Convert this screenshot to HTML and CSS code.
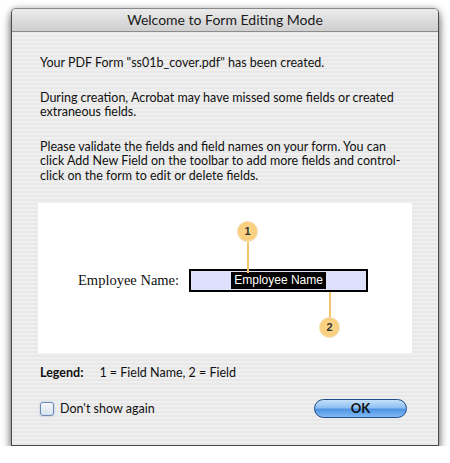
FILE: index.html
```html
<!DOCTYPE html>
<html>
<head>
<meta charset="utf-8">
<link rel="stylesheet" href="styles.css">
</head>
<body>
<div class="window">
  <div class="titlebar">Welcome to Form Editing Mode</div>
  <div class="content">
    <p class="para">Your PDF Form "ss01b_cover.pdf" has been created.</p>
    <p class="para">During creation, Acrobat may have missed some fields or created extraneous fields.</p>
    <p class="para">Please validate the fields and field names on your form. You can click Add New Field on the toolbar to add more fields and control-click on the form to edit or delete fields.</p>
    <div class="sample">
      <div class="sample-row">
        <span class="sample-label">Employee Name:</span>
        <div class="field">
          <span class="field-name">Employee Name</span>
          <div class="callout callout-1"><span class="bubble">1</span><span class="stem"></span></div>
          <div class="callout callout-2"><span class="stem"></span><span class="bubble">2</span></div>
        </div>
      </div>
    </div>
    <p class="legend"><b>Legend:</b><span class="legend-text">1 = Field Name, 2 = Field</span></p>
    <div class="footer">
      <label class="check"><span class="box"></span>Don't show again</label>
      <button class="ok">OK</button>
    </div>
  </div>
</div>
</body>
</html>
```

FILE: styles.css
```css
html, body {
  margin: 0;
  padding: 0;
  background: #ffffff;
}
body {
  font-family: "Lato", "DejaVu Sans", sans-serif;
  font-size: 12.5px;
  color: #111;
}
.window {
  margin: 8px 0 0 11px;
  width: 426px;
  height: 436px;
  border: 1px solid #4a4a4a;
  border-top-color: #888;
  border-radius: 5px 5px 0 0;
  box-shadow: 0 6px 10px rgba(0,0,0,0.55), 0 0 6px rgba(0,0,0,0.25);
  background: repeating-linear-gradient(to bottom, #efefef 0, #efefef 2px, #e8e8e8 2px, #e8e8e8 4px);
  overflow: hidden;
  display: flex;
  flex-direction: column;
}
.titlebar {
  height: 22px;
  line-height: 22px;
  text-align: center;
  font-size: 14px;
  color: #1a1a1a;
  background: linear-gradient(to bottom, #ececec 0%, #dcdcdc 50%, #cfcfcf 100%);
  border-bottom: 1px solid #8c8c8c;
}
.content {
  padding: 0 0 0 28px;
  display: flex;
  flex-direction: column;
}
.para {
  margin: 0;
  line-height: 14.5px;
  width: 372px;
}
.para:first-child { margin-top: 24px; }
.para + .para { margin-top: 20px; }
.sample {
  margin: 20px 0 0 -2px;
  width: 374px;
  height: 150px;
  background: #fff;
  display: flex;
  align-items: center;
}
.sample-row {
  display: flex;
  align-items: center;
  margin: 5px 0 0 40px;
}
.sample-label {
  font-family: "Liberation Serif", serif;
  font-size: 14.5px;
  color: #111;
}
.field {
  position: relative;
  margin-left: 10px;
  width: 175px;
  height: 19px;
  border: 2px solid #000;
  background: #dde1fb;
  display: flex;
  align-items: center;
  justify-content: center;
}
.field-name {
  background: #000;
  color: #fff;
  font-family: "Liberation Sans", sans-serif;
  font-size: 12px;
  height: 17px;
  line-height: 17px;
  padding: 0 3px;
  white-space: nowrap;
}
.callout {
  position: absolute;
  display: flex;
  flex-direction: column;
  align-items: center;
  width: 21px;
}
.callout-1 { left: 46px; top: -50px; }
.callout-2 { left: 128px; top: 21px; }
.bubble {
  width: 19px;
  height: 19px;
  border-radius: 50%;
  background: radial-gradient(circle at 50% 45%, #fcd58a 0%, #f9cf7f 60%, #f6d9a0 100%);
  border: 1px solid #f3dcae;
  font-family: "Liberation Sans", sans-serif;
  font-weight: bold;
  font-size: 11px;
  line-height: 19px;
  text-align: center;
  color: #333;
}
.stem {
  width: 2px;
  background: #f2c46c;
}
.callout-1 .stem { height: 31px; }
.callout-2 .stem { height: 25px; }
.legend {
  margin: 12px 0 0 0;
  line-height: 15px;
}
.legend b { font-weight: bold; }
.legend-text { margin-left: 16px; }
.footer {
  margin-top: 19px;
  display: flex;
  align-items: center;
  justify-content: space-between;
  width: 367px;
}
.check {
  display: flex;
  align-items: center;
  gap: 6px;
}
.box {
  width: 12px;
  height: 12px;
  border: 1px solid #6d88b0;
  border-radius: 3px;
  background: linear-gradient(to bottom, #f4f7fb, #d7e2ef);
  box-shadow: 0 0 2px #9ab6dd;
}
.ok {
  width: 93px;
  height: 19px;
  border-radius: 10px;
  border: 1px solid #1f4d8c;
  background: linear-gradient(to bottom, #c6e0fa 0%, #8fc0f3 45%, #4f95e4 55%, #7fb9f5 100%);
  font-family: "Lato", "DejaVu Sans", sans-serif;
  font-size: 13px;
  font-weight: bold;
  color: #111;
  padding: 0;
  line-height: 17px;
}
```
